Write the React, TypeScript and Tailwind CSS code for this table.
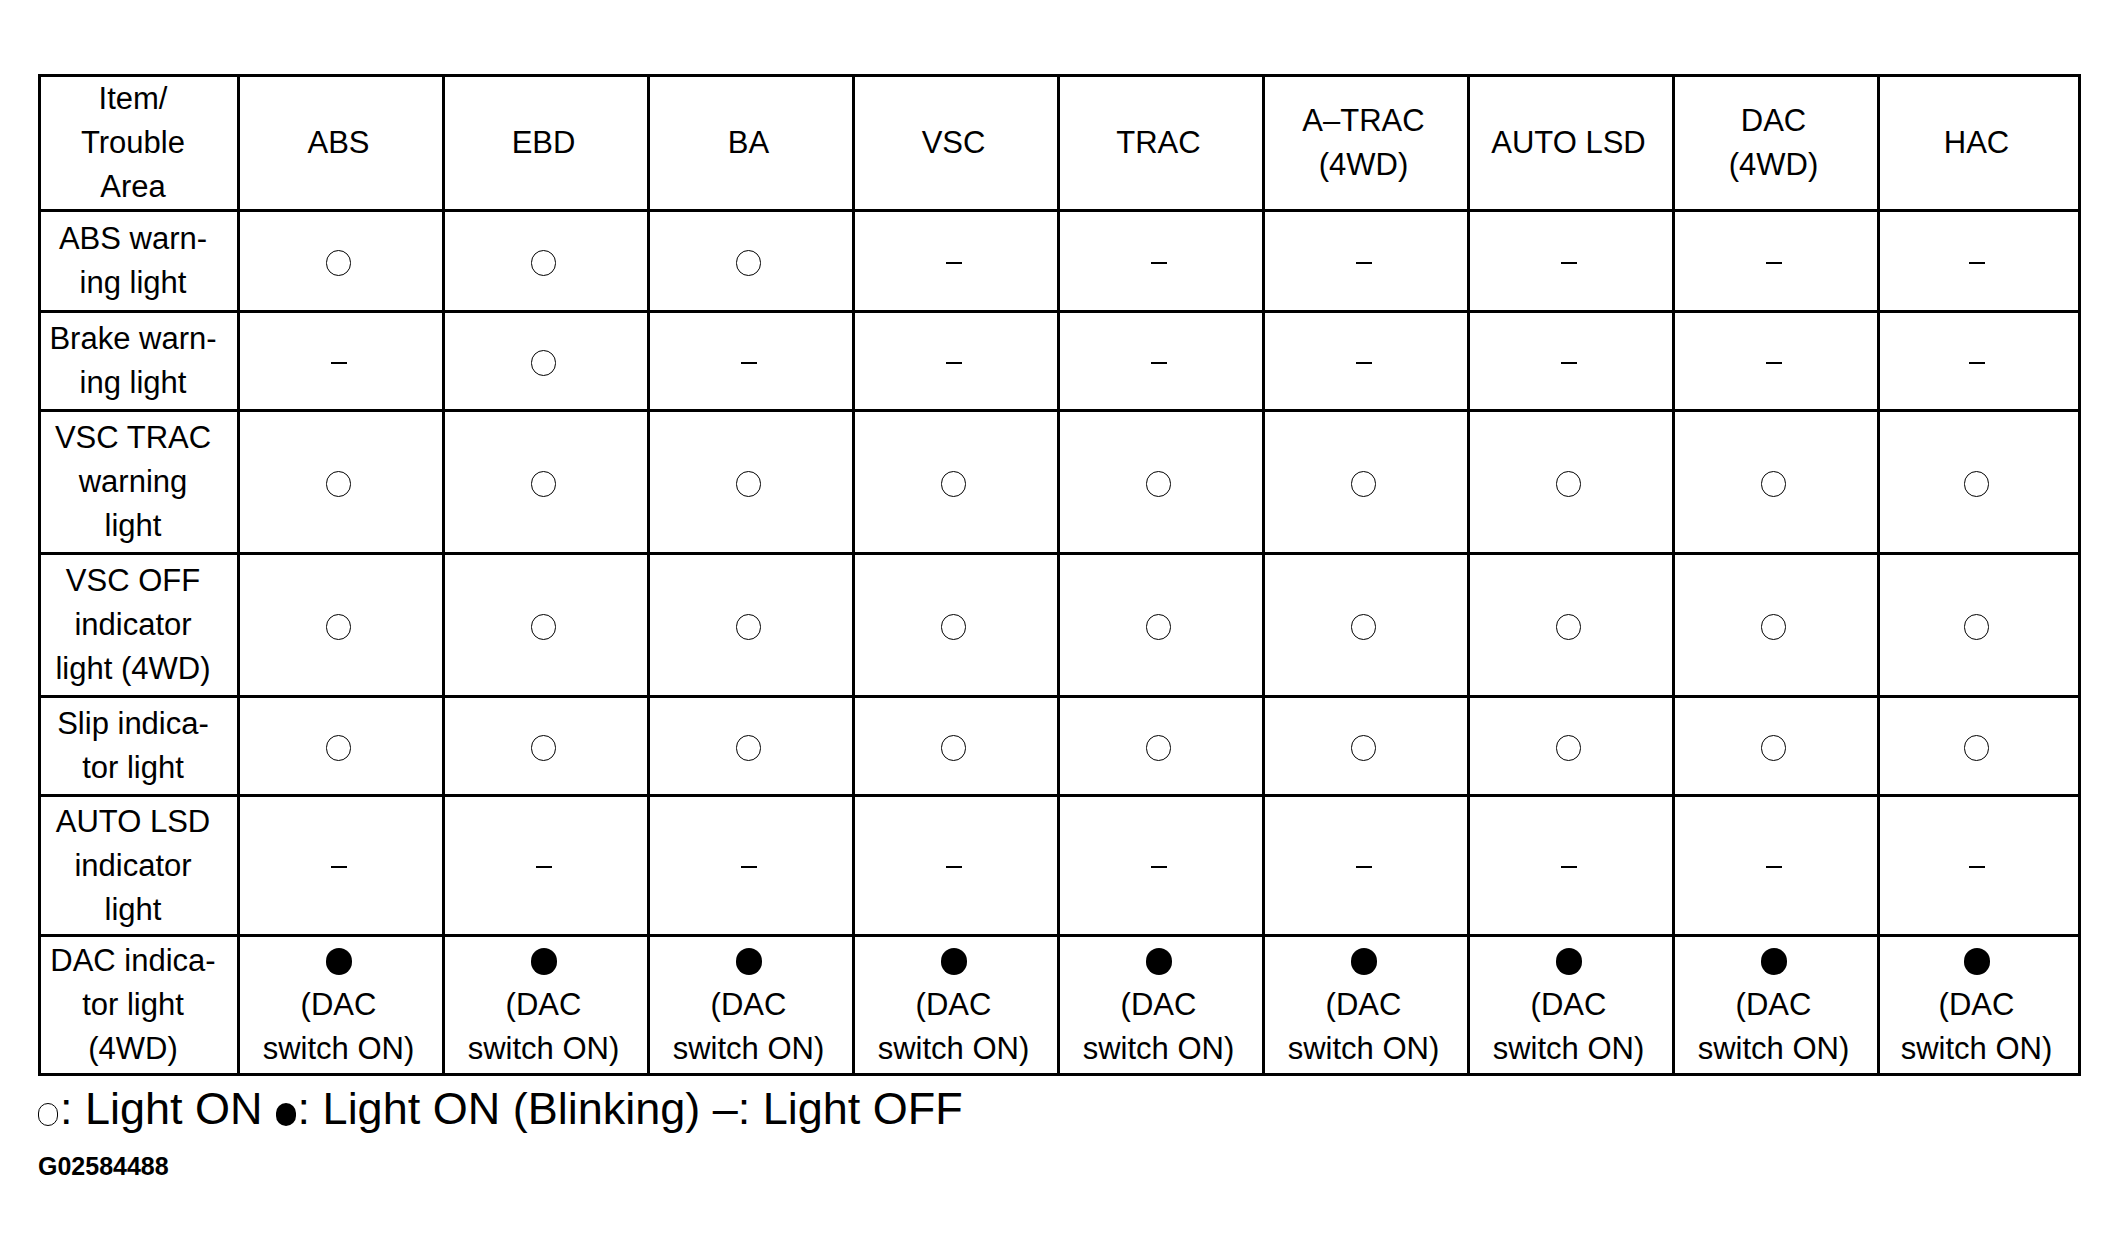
const columns = [
  ["ABS"],
  ["EBD"],
  ["BA"],
  ["VSC"],
  ["TRAC"],
  ["A–TRAC", "(4WD)"],
  ["AUTO LSD"],
  ["DAC", "(4WD)"],
  ["HAC"],
];

type Mark = "on" | "off" | "blink";

const rows: { label: string[]; height: string; marks: Mark[] }[] = [
  { label: ["ABS warn-", "ing light"], height: "h-[101px]", marks: ["on", "on", "on", "off", "off", "off", "off", "off", "off"] },
  { label: ["Brake warn-", "ing light"], height: "h-[99px]", marks: ["off", "on", "off", "off", "off", "off", "off", "off", "off"] },
  { label: ["VSC TRAC", "warning", "light"], height: "h-[143px]", marks: Array(9).fill("on") },
  { label: ["VSC OFF", "indicator", "light (4WD)"], height: "h-[143px]", marks: Array(9).fill("on") },
  { label: ["Slip indica-", "tor light"], height: "h-[99px]", marks: Array(9).fill("on") },
  { label: ["AUTO LSD", "indicator", "light"], height: "h-[140px]", marks: Array(9).fill("off") },
  { label: ["DAC indica-", "tor light", "(4WD)"], height: "h-[139px]", marks: Array(9).fill("blink") },
];

function Lines({ lines }: { lines: string[] }) {
  return (
    <>
      {lines.map((l) => (
        <div key={l}>{l}</div>
      ))}
    </>
  );
}

function Cell({ mark }: { mark: Mark }) {
  if (mark === "on") {
    return <span className="inline-block w-[25px] h-[26px] rounded-full border-[1.5px] border-black align-middle" />;
  }
  if (mark === "off") {
    return <span className="inline-block w-[16px] h-[2px] bg-black align-middle" />;
  }
  return (
    <div className="flex flex-col items-center">
      <div className="h-[44px] flex items-center">
        <span className="inline-block w-[26px] h-[27px] rounded-full bg-black" />
      </div>
      <div>(DAC</div>
      <div>switch ON)</div>
    </div>
  );
}

export default function App() {
  return (
    <div
      className="min-h-screen bg-white text-black pl-[38px] pt-[74px]"
      style={{ fontFamily: '"Liberation Sans", Arial, sans-serif' }}
    >
      <table className="table-fixed border-collapse w-[2040px] text-[31px] leading-[44px]">
        <colgroup>
          <col className="w-[199px]" />
          {columns.slice(0, 8).map((c) => (
            <col key={c.join()} className="w-[205px]" />
          ))}
          <col className="w-[201px]" />
        </colgroup>
        <thead>
          <tr className="h-[133px]">
            <th className="border-[3px] border-black font-normal text-center align-middle pr-[12px]">
              <Lines lines={["Item/", "Trouble", "Area"]} />
            </th>
            {columns.map((c) => (
              <th key={c.join()} className="border-[3px] border-black font-normal text-center align-middle pr-[5px]">
                <Lines lines={c} />
              </th>
            ))}
          </tr>
        </thead>
        <tbody>
          {rows.map((r) => (
            <tr key={r.label.join()} className={r.height}>
              <td className="border-[3px] border-black text-center align-middle pr-[12px]">
                <Lines lines={r.label} />
              </td>
              {r.marks.map((m, i) => (
                <td key={i} className="border-[3px] border-black text-center align-middle pr-[5px]">
                  <Cell mark={m} />
                </td>
              ))}
            </tr>
          ))}
        </tbody>
      </table>

      <div className="mt-[8px] flex items-center text-[45px] leading-[50px]">
        <span className="inline-block w-[20px] h-[23px] rounded-full border-[1.5px] border-black mt-[11px] mr-[2px]" />
        <span>: Light ON</span>
        <span className="inline-block w-[20px] h-[23px] rounded-full bg-black mt-[11px] ml-[13px] mr-[2px]" />
        <span>: Light ON (Blinking) –: Light OFF</span>
      </div>

      <div className="mt-[18px] text-[25px] leading-[28px] font-bold">G02584488</div>
    </div>
  );
}
